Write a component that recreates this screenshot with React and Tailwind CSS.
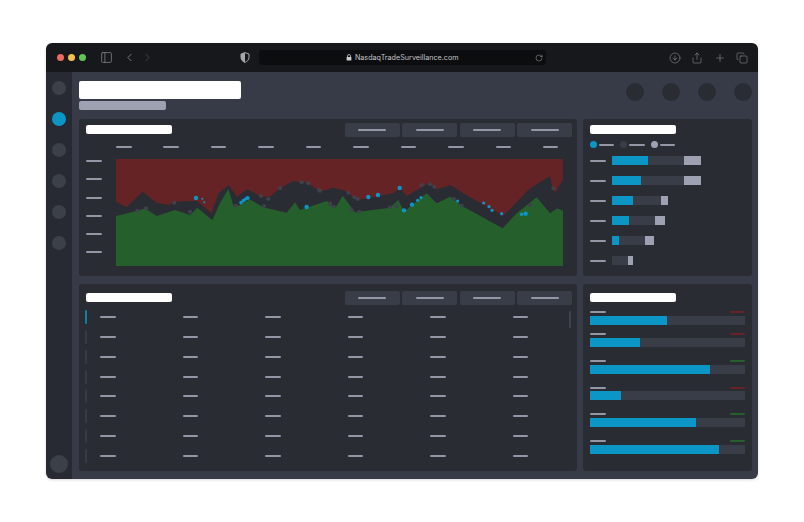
import { PanelLeft, ChevronLeft, ChevronRight, RotateCw, CircleArrowDown, Share, Plus, Copy } from 'lucide-react';

// chart points were read off two crops of the picture, so map them back to chart space
const fromLeft = ([x, y]) => [80 + x / 3 - 116, 150 + y / 3 - 159];
const fromRight = ([x, y]) => [320 + x / 3 - 116, 150 + y / 3 - 159];

const redEdge = [
    ...[[108, 155], [140, 172], [188, 125], [230, 158], [265, 165], [285, 155], [350, 152], [395, 190], [415, 130], [447, 105], [470, 140], [503, 118], [545, 140], [570, 140], [600, 115], [640, 93], [685, 100]].map(fromLeft),
    ...[[0, 125], [40, 113], [75, 122], [105, 145], [115, 150], [220, 130], [240, 115], [260, 138], [325, 100], [350, 118], [392, 105], [430, 130], [550, 197], [630, 115], [690, 78], [697, 110], [705, 130], [729, 88]].map(fromRight),
];
const greenEdge = [
    ...[[108, 198], [130, 193], [180, 180], [195, 175], [230, 198], [285, 180], [330, 195], [352, 173], [397, 210], [420, 160], [445, 117], [462, 172], [480, 165], [510, 148], [550, 172], [620, 188], [645, 157], [660, 180]].map(fromLeft),
    ...[[20, 153], [45, 175], [68, 137], [105, 187], [210, 173], [235, 150], [252, 185], [320, 130], [350, 160], [390, 140], [430, 170], [548, 235], [590, 190], [650, 142], [690, 190], [712, 175], [729, 182]].map(fromRight),
];
const blueDots = [
    ...[[348, 144, 2.2], [367, 146, 1], [373, 157, 1], [483, 158, 1.8], [490, 152, 1.8], [497, 147, 1.8], [503, 144, 2], [680, 171, 2.2]].map((d) => [...fromLeft(d), d[2]]),
    ...[[145, 141, 2.2], [174, 135, 2.2], [239, 114, 2.2], [252, 181, 2.2], [276, 164, 2.2], [293, 151, 1.6], [303, 143, 1.6], [413, 153, 1.6], [491, 159, 1.6], [507, 170, 1.6], [516, 181, 1.6], [545, 191, 1.6], [605, 193, 1.8], [617, 191, 2.2]].map((d) => [...fromRight(d), d[2]]),
];
const grayDots = [
    ...[[172, 182], [198, 175], [283, 158], [330, 185], [468, 167], [543, 138], [565, 147], [600, 115], [552, 168], [665, 97], [685, 100], [717, 120], [750, 160]].map(fromLeft),
    ...[[0, 122], [30, 163], [42, 170], [85, 128], [103, 142], [113, 147], [95, 180], [118, 185], [210, 172], [230, 168], [305, 105], [330, 103], [343, 110], [402, 147], [425, 167], [630, 165], [700, 115]].map(fromRight),
];

const toPath = (pts) => pts.map((p) => p.join(',')).join(' ');

const stackedRows = [
    { blue: 36, dark: 36, light: 17 },
    { blue: 28.5, dark: 43.5, light: 17 },
    { blue: 20.7, dark: 28.3, light: 6.7 },
    { blue: 17, dark: 26, light: 10 },
    { blue: 6.7, dark: 26, light: 9.6 },
    { blue: 0, dark: 16, light: 5 },
];

const progressRows = [
    { width: 77, up: false, gap: 'mt-0' },
    { width: 50.3, up: false, gap: 'mt-[8.6px]' },
    { width: 119.7, up: true, gap: 'mt-[13px]' },
    { width: 31.3, up: false, gap: 'mt-[13px]' },
    { width: 106.3, up: true, gap: 'mt-[13px]' },
    { width: 129, up: true, gap: 'mt-[13px]' },
];

function Dash({ className = 'w-[15.5px]' }) {
    return <div className={`h-[2px] rounded-full bg-[#9396a4] flex-shrink-0 ${className}`} />;
}

function Tabs() {
    return (
        <div className="flex gap-[2.4px]">
            {[0, 1, 2, 3].map((i) => (
                <div key={i} className="w-[55px] h-[14px] rounded-[2px] bg-[#393d47] flex items-center justify-center">
                    <Dash className="w-[28px]" />
                </div>
            ))}
        </div>
    );
}

function PanelTitle() {
    return <div className="w-[86px] h-[9px] rounded-[2px] bg-white flex-shrink-0" />;
}

function TitleBar() {
    return (
        <div className="h-[29px] bg-[#17181b] flex items-center flex-shrink-0 relative text-[#8d8f94]">
            <div className="flex gap-[4.7px] ml-[11px] w-[49px]">
                <div className="w-[6.5px] h-[6.5px] rounded-full bg-[#ec6a5e]" />
                <div className="w-[6.5px] h-[6.5px] rounded-full bg-[#f4bf4f]" />
                <div className="w-[6.5px] h-[6.5px] rounded-full bg-[#61c554]" />
            </div>
            <PanelLeft size={13} strokeWidth={1.3} className="ml-[-6px] mr-[10px]" />
            <ChevronLeft size={13} strokeWidth={1.5} />
            <ChevronRight size={13} strokeWidth={1.5} className="ml-[5px] text-[#4a4c51]" />
            <svg width="10" height="11" viewBox="0 0 10 11" className="ml-[86px]">
                <path d="M5 .6 9 2v3.4c0 2.4-1.7 4-4 5-2.3-1-4-2.600-4-5V2z" fill="none" stroke="#a5a7ab" strokeWidth="1" />
                <path d="M5 .6 1 2v3.400c0 2.400 1.700 4 4 5z" fill="#a5a7ab" />
            </svg>
            <div className="ml-[9px] w-[287px] h-[15px] rounded-[3px] bg-[#0c0d0f] flex items-center justify-center relative">
                <svg width="6" height="7" viewBox="0 0 6 7" className="mr-[2.5px]">
                    <path d="M1.500 3V2a1.500 1.500 0 0 1 3 0v1" fill="none" stroke="#c9cacc" strokeWidth=".8" />
                    <rect x=".6" y="3" width="4.800" height="3.600" rx=".6" fill="#c9cacc" />
                </svg>
                <span className="pt-px text-[7.2px] text-[#c3c4c7] font-['Inter',sans-serif]">NasdaqTradeSurveillance.com</span>
                <RotateCw size={8} strokeWidth={1.5} className="absolute right-[3px] text-[#a5a7ab]" />
            </div>
            <div className="ml-auto flex items-center gap-[10.5px] pr-[10px]">
                <CircleArrowDown size={12} strokeWidth={1.2} />
                <Share size={12} strokeWidth={1.2} />
                <Plus size={12} strokeWidth={1.2} />
                <Copy size={12} strokeWidth={1.2} />
            </div>
        </div>
    );
}

function Sidebar() {
    return (
        <div className="w-[26px] bg-[#272a32] flex flex-col items-center pt-[9px] pb-[6px] flex-shrink-0">
            <div className="flex flex-col gap-[17px]">
                <div className="w-[14px] h-[14px] rounded-full bg-[#3c4049]" />
                <div className="w-[14px] h-[14px] rounded-full bg-[#0c96c5]" />
                <div className="w-[14px] h-[14px] rounded-full bg-[#3c4049]" />
                <div className="w-[14px] h-[14px] rounded-full bg-[#3c4049]" />
                <div className="w-[14px] h-[14px] rounded-full bg-[#3c4049]" />
                <div className="w-[14px] h-[14px] rounded-full bg-[#3c4049]" />
            </div>
            <div className="mt-auto w-[18px] h-[18px] rounded-full bg-[#3c4049]" />
        </div>
    );
}

function Chart() {
    return (
        <svg width="447" height="107" viewBox="0 0 447 107" className="block">
            <rect width="447" height="107" fill="#292c33" />
            <polygon points={`0,0 447,0 ${toPath([...redEdge].reverse())}`} fill="#662326" />
            <polygon points={`${toPath(greenEdge)} 447,107 0,107`} fill="#255f2c" />
            {grayDots.map(([x, y], i) => (
                <circle key={i} cx={x} cy={y} r="2" fill="#3f424b" />
            ))}
            {blueDots.map(([x, y, r], i) => (
                <circle key={i} cx={x} cy={y} r={r} fill="#0c96c5" />
            ))}
        </svg>
    );
}

function ChartPanel() {
    return (
        <div className="h-[157px] rounded-[3px] bg-[#292c33] pl-[7px] pr-[5px] pt-[4px]">
            <div className="flex items-start justify-between">
                <div className="pt-[2px]"><PanelTitle /></div>
                <Tabs />
            </div>
            <div className="mt-[9px] ml-[30px] w-[442.5px] flex justify-between">
                {[0, 1, 2, 3, 4, 5, 6, 7, 8, 9].map((i) => (
                    <Dash key={i} />
                ))}
            </div>
            <div className="mt-[11px] flex">
                <div className="w-[30px] flex flex-col gap-[16.3px] pt-px">
                    {[0, 1, 2, 3, 4, 5].map((i) => (
                        <Dash key={i} />
                    ))}
                </div>
                <Chart />
            </div>
        </div>
    );
}

function TablePanel() {
    return (
        <div className="h-[187px] rounded-[3px] bg-[#292c33] pl-[6px] pr-[5px] pt-[7px] relative">
            <div className="flex items-start justify-between">
                <div className="pt-[2px] pl-px"><PanelTitle /></div>
                <Tabs />
            </div>
            {/* scrollbar */}
            <div className="absolute top-[27px] right-[6px] w-[2px] h-[17px] rounded-full bg-[#3f434d]" />
            <div className="mt-[5px] flex flex-col gap-[5.85px]">
                {[0, 1, 2, 3, 4, 5, 6, 7].map((row) => (
                    <div key={row} className="h-[14px] flex items-center">
                        <div className={`w-[2px] h-[14px] rounded-full flex-shrink-0 ${row === 0 ? 'bg-[#0f7ea6]' : 'bg-[#363a44]'}`} />
                        <div className="ml-[13px] grid grid-cols-[repeat(6,82.5px)] flex-shrink-0">
                            {[0, 1, 2, 3, 4, 5].map((col) => (
                                <Dash key={col} />
                            ))}
                        </div>
                    </div>
                ))}
            </div>
        </div>
    );
}

function StackedPanel() {
    return (
        <div className="h-[157px] rounded-[3px] bg-[#292c33] pl-[7px] pt-[6px]">
            <PanelTitle />
            <div className="mt-[7px] flex items-center">
                <div className="w-[7px] h-[7px] rounded-full bg-[#0c96c5] ml-[-0.5px]" />
                <Dash className="w-[15.5px] ml-[2px]" />
                <div className="w-[7px] h-[7px] rounded-full bg-[#393d47] ml-[6px]" />
                <Dash className="w-[15.5px] ml-[2px]" />
                <div className="w-[7px] h-[7px] rounded-full bg-[#9ea1b2] ml-[6px]" />
                <Dash className="w-[15.5px] ml-[2px]" />
            </div>
            <div className="mt-[8px] flex flex-col gap-[11px]">
                {stackedRows.map((row, i) => (
                    <div key={i} className="h-[9px] flex items-center">
                        <Dash />
                        <div className="ml-[6.5px] h-[9px] bg-[#0c96c5]" style={{ width: row.blue }} />
                        <div className="h-[9px] bg-[#393d47]" style={{ width: row.dark }} />
                        <div className="h-[9px] bg-[#9ea1b2]" style={{ width: row.light }} />
                    </div>
                ))}
            </div>
        </div>
    );
}

function ProgressPanel() {
    return (
        <div className="h-[187px] rounded-[3px] bg-[#292c33] pl-[7px] pr-[7px] pt-[9px]">
            <PanelTitle />
            <div className="mt-[9px]">
                {progressRows.map((row, i) => (
                    <div key={i} className={row.gap}>
                        <div className="flex justify-between">
                            <Dash />
                            <div className={`w-[15.5px] h-[2px] rounded-full ${row.up ? 'bg-[#255f2c]' : 'bg-[#662326]'}`} />
                        </div>
                        <div className="mt-[2.7px] h-[9px] bg-[#393d47]">
                            <div className="h-[9px] bg-[#0c96c5]" style={{ width: row.width }} />
                        </div>
                    </div>
                ))}
            </div>
        </div>
    );
}

export default function App() {
    return (
        <div className="w-[804px] h-[522px] bg-white pl-[46px] pt-[43px] overflow-hidden">
            <div className="w-[712px] h-[436px] rounded-[6px] overflow-hidden flex flex-col shadow-[0_1px_3px_rgba(0,0,0,0.15)]">
                <TitleBar />
                <div className="flex flex-grow min-h-0">
                    <Sidebar />
                    <div className="flex-grow bg-[#363b47] pl-[7px] pr-[6px] pt-[9px]">
                        <div className="h-[38px] flex items-start justify-between">
                            <div>
                                <div className="w-[162px] h-[18px] rounded-[2px] bg-white" />
                                <div className="mt-[2px] w-[87px] h-[9px] rounded-[2px] bg-[#9ea1b2]" />
                            </div>
                            <div className="flex gap-[18px] pt-[2px]">
                                <div className="w-[18px] h-[18px] rounded-full bg-[#292c33]" />
                                <div className="w-[18px] h-[18px] rounded-full bg-[#292c33]" />
                                <div className="w-[18px] h-[18px] rounded-full bg-[#292c33]" />
                                <div className="w-[18px] h-[18px] rounded-full bg-[#292c33]" />
                            </div>
                        </div>
                        <div className="grid grid-cols-[498px_169px] gap-x-[6px] gap-y-[8px]">
                            <ChartPanel />
                            <StackedPanel />
                            <TablePanel />
                            <ProgressPanel />
                        </div>
                    </div>
                </div>
            </div>
        </div>
    );
}
